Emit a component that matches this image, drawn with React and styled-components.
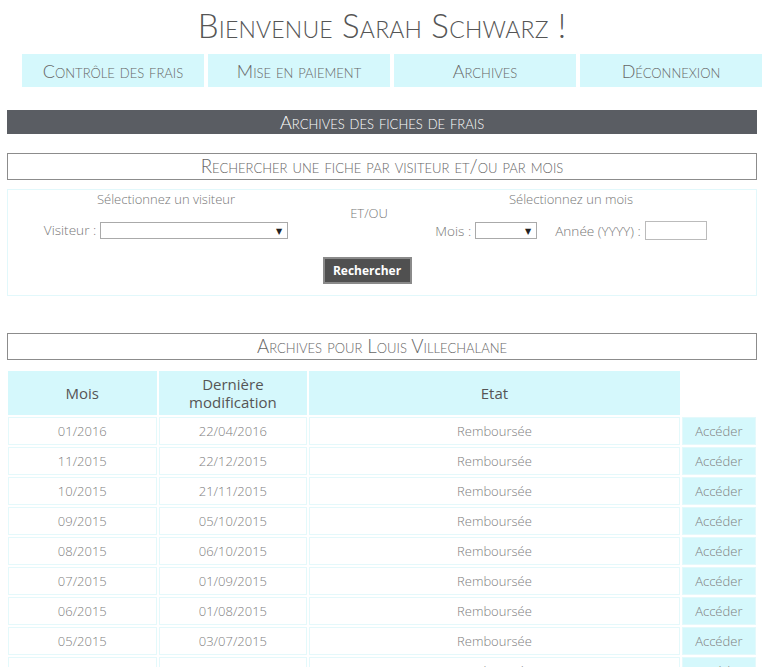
import styled, { createGlobalStyle } from 'styled-components';

const GlobalStyle = createGlobalStyle`
    body {
        margin: 0;
        background: #fff;
        font-family: "Open Sans", "DejaVu Sans", sans-serif;
        color: #808080;
    }
`;

const rows = [
    ['01/2016', '22/04/2016'],
    ['11/2015', '22/12/2015'],
    ['10/2015', '21/11/2015'],
    ['09/2015', '05/10/2015'],
    ['08/2015', '06/10/2015'],
    ['07/2015', '01/09/2015'],
    ['06/2015', '01/08/2015'],
    ['05/2015', '03/07/2015'],
    ['04/2015', '02/06/2015'],
];

const Page = styled.div`
    padding: 5px 11px 0 7px;
`;

const Title = styled.h1`
    margin: 0;
    text-align: center;
    font-family: Lato, "Open Sans", sans-serif;
    font-weight: 300;
    font-variant: small-caps;
    font-size: 33px;
    line-height: 40px;
    color: #555;
    letter-spacing: 0.2px;
`;

const Nav = styled.nav`
    display: grid;
    grid-template-columns: repeat(4, 182px);
    gap: 4px;
    width: 740px;
    margin: 9px 0 0 15px;
`;

const NavItem = styled.a`
    display: flex;
    align-items: center;
    justify-content: center;
    height: 33px;
    background: #d5f8fc;
    font-family: Lato, "Open Sans", sans-serif;
    font-weight: 300;
    font-variant: small-caps;
    font-size: 18px;
    color: #666;
`;

const DarkBar = styled.div`
    margin-top: 23px;
    height: 24px;
    background: #5a5d63;
    color: #fff;
    text-align: center;
    font-family: Lato, "Open Sans", sans-serif;
    font-weight: 300;
    font-variant: small-caps;
    font-size: 18.2px;
    line-height: 24px;
`;

const Caption = styled.div`
    margin-top: ${(p) => p.$top}px;
    height: 25px;
    border: 1.5px solid #8c8c8c;
    text-align: center;
    font-family: Lato, "Open Sans", sans-serif;
    font-weight: 300;
    font-variant: small-caps;
    font-size: 18.7px;
    line-height: 25px;
    color: #666;
`;

const SearchBox = styled.div`
    margin-top: 9px;
    border: 1px solid #e2f8fb;
    padding: 0 0 11px;
`;

const SearchGrid = styled.div`
    display: grid;
    grid-template-columns: 316px 90px 314px;
`;

const Col = styled.div`
    display: flex;
    flex-direction: column;
    align-items: center;
    gap: 13px;
`;

const Label = styled.div`
    font-size: 13px;
    font-weight: 300;
    line-height: 18px;
    color: #777;
`;

const RowLabel = styled(Label)`
    font-size: 13.6px;
`;

const Middle = styled(Label)`
    text-align: center;
    padding-top: 14px;
`;

const Row = styled.div`
    display: flex;
    align-items: center;
    gap: 4px;
`;

const FakeSelect = styled.div`
    width: ${(p) => p.$w}px;
    height: 17px;
    box-sizing: border-box;
    border: 1px solid #aaa;
    background: #fff;
    display: flex;
    align-items: center;
    justify-content: flex-end;
    padding-right: 5px;
    font-size: 8px;
    color: #222;
    margin-right: ${(p) => p.$mr || 0}px;
`;

const TextInput = styled.div`
    width: 62px;
    height: 19px;
    box-sizing: border-box;
    border: 1px solid #bbb;
`;

const ButtonRow = styled.div`
    display: flex;
    justify-content: center;
    margin-top: 17px;
    padding-right: 30px;
`;

const Button = styled.button`
    width: 89px;
    height: 27px;
    background: #505050;
    border: 2px solid #8a8a8a;
    color: #fff;
    font-family: "Open Sans", sans-serif;
    font-weight: 700;
    font-size: 12px;
    padding: 0;
`;

const Table = styled.table`
    margin-top: 9px;
    width: 752px;
    border-collapse: separate;
    border-spacing: 2px;
    margin-left: -1px;
`;

const Th = styled.th`
    height: 44px;
    padding: 0;
    background: ${(p) => (p.$empty ? '#fff' : '#d5f8fc')};
    font-weight: 400;
    font-size: 15px;
    line-height: 18px;
    color: #555;
    width: ${(p) => p.$w}px;
`;

const Td = styled.td`
    height: 26px;
    padding: 0;
    text-align: center;
    border: 1px solid #e4f9fb;
    background: ${(p) => (p.$accent ? '#d5f8fc' : '#fff')};
    font-size: 13px;
    font-weight: 300;
    color: #808080;
`;

export default function App() {
    return (
        <>
            <GlobalStyle />
            <Page>
                <Title>Bienvenue Sarah Schwarz !</Title>
                <Nav>
                    <NavItem>Contrôle des frais</NavItem>
                    <NavItem>Mise en paiement</NavItem>
                    <NavItem>Archives</NavItem>
                    <NavItem>Déconnexion</NavItem>
                </Nav>
                <DarkBar>Archives des fiches de frais</DarkBar>
                <Caption $top={19}>Rechercher une fiche par visiteur et/ou par mois</Caption>
                <SearchBox>
                    <SearchGrid>
                        <Col>
                            <Label>Sélectionnez un visiteur</Label>
                            <Row>
                                <RowLabel>Visiteur :</RowLabel>
                                <FakeSelect $w={188}>▼</FakeSelect>
                            </Row>
                        </Col>
                        <Middle>ET/OU</Middle>
                        <Col>
                            <Label>Sélectionnez un mois</Label>
                            <Row>
                                <RowLabel>Mois :</RowLabel>
                                <FakeSelect $w={62} $mr={14}>▼</FakeSelect>
                                <RowLabel>Année (YYYY) :</RowLabel>
                                <TextInput />
                            </Row>
                        </Col>
                    </SearchGrid>
                    <ButtonRow>
                        <Button>Rechercher</Button>
                    </ButtonRow>
                </SearchBox>
                <Caption $top={37}>Archives pour Louis Villechalane</Caption>
                <Table>
                    <thead>
                        <tr>
                            <Th $w={148}>Mois</Th>
                            <Th $w={148}>Dernière<br />modification</Th>
                            <Th $w={369}>Etat</Th>
                            <Th $empty $w={74}></Th>
                        </tr>
                    </thead>
                    <tbody>
                        {rows.map(([mois, date]) => (
                            <tr key={mois}>
                                <Td>{mois}</Td>
                                <Td>{date}</Td>
                                <Td>Remboursée</Td>
                                <Td $accent>Accéder</Td>
                            </tr>
                        ))}
                    </tbody>
                </Table>
            </Page>
        </>
    );
}
